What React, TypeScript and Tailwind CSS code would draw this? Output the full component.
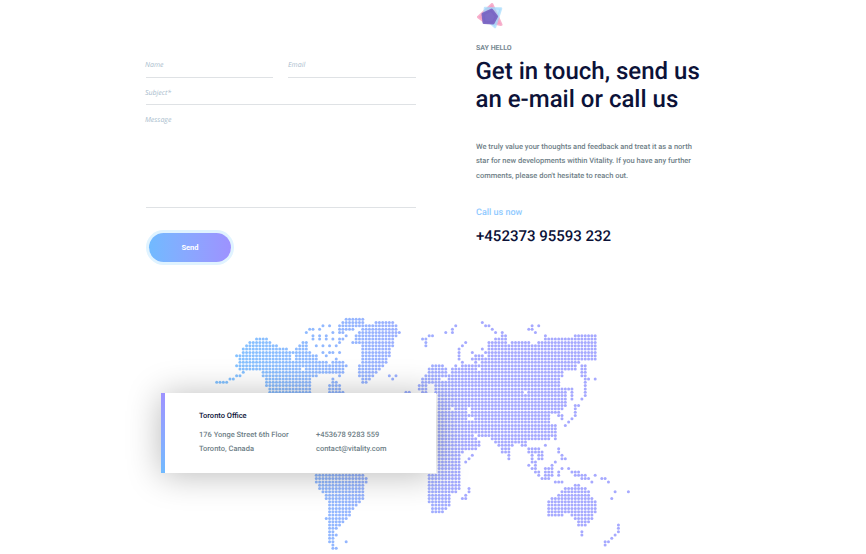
const P = 3.32;
const X0 = 216.7;
const Y0 = 319.2;
type Pt = [number, number];
type Z = [number, number];
const Z5: Z = [210, 310];
const Z6: Z = [410, 310];
const Z7: Z = [410, 430];
const Z8: Z = [300, 465];
const conv = (z: Z, pts: Pt[]): Pt[] => pts.map(([x, y]) => [z[0] + x / 3, z[1] + y / 3]);

const polys: Pt[][] = [
  conv(Z5, [[78,165],[98,112],[116,92],[160,80],[195,105],[225,112],[250,125],[265,100],[290,88],[300,125],[330,150],[360,160],[395,145],[412,165],[395,200],[370,195],[345,190],[300,205],[300,252],[175,252],[165,210],[150,180],[130,178],[100,190],[85,172]]),
  conv(Z5, [[352,252],[365,203],[382,215],[408,252]]),
  conv(Z5, [[423,97],[450,62],[455,48],[510,33],[552,38],[570,65],[550,100],[547,120],[532,162],[500,187],[470,218],[453,218],[443,182],[450,150],[455,100]]),
  conv(Z5, [[413,24],[460,24],[472,44],[385,72],[385,44]]),
  // Eurasia
  conv(Z6, [[18,240],[35,203],[60,172],[80,158],[105,168],[117,190],[130,172],[180,160],[210,158],[235,152],[236,92],[290,70],[296,100],[320,92],[380,100],[410,78],[490,78],[495,70],[562,70],[562,155],[520,152],[495,178],[460,182],[450,232],[470,232],[470,290],[450,312],[440,362],[420,362],[78,362],[78,250],[40,250]]),
  conv(Z6, [[513,160],[531,160],[531,262],[521,262],[521,205],[513,200]]),
  conv(Z6, [[472,230],[494,232],[494,268],[482,268]]),
  conv(Z7, [[78,-2],[438,-2],[438,20],[410,32],[358,32],[348,52],[310,38],[297,78],[280,72],[250,30],[220,20],[195,15],[218,40],[192,65],[165,65],[152,70],[148,122],[150,125],[147,182],[127,190],[125,215],[102,248],[70,252],[58,225],[48,190],[48,128],[78,128]]),
  conv(Z7, [[347,48],[382,48],[402,62],[402,86],[384,86],[384,72],[372,72],[372,97],[364,97]]),
  conv(Z7, [[404,114],[432,108],[432,136],[404,136]]),
  conv(Z7, [[414,208],[440,198],[465,173],[500,163],[527,168],[542,195],[562,225],[557,245],[537,282],[503,292],[493,266],[470,250],[440,264],[413,264]]),
  conv(Z8, [[43,22],[172,22],[195,28],[208,45],[195,58],[192,100],[162,127],[152,147],[132,167],[108,200],[108,218],[102,240],[122,252],[105,257],[83,232],[83,110],[73,90],[53,67],[43,47]]),
];

const holes: Pt[][] = [
  conv(Z5, [[240,135],[258,138],[258,148],[240,148]]),
  conv(Z5, [[304,205],[345,195],[345,235],[304,232]]),
  conv(Z5, [[268,172],[285,165],[290,180],[272,186]]),
  conv(Z6, [[337,236],[350,240],[345,258],[337,258]]),
  conv(Z6, [[170,294],[184,294],[186,308],[170,308]]),
  conv(Z6, [[172,320],[190,320],[190,330],[172,330]]),
  conv(Z6, [[127,292],[136,292],[136,302],[127,302]]),
  conv(Z6, [[416,315],[445,308],[448,340],[424,340]]),
  conv(Z6, [[96,202],[108,202],[108,214],[96,214]]),
  conv(Z6, [[57,218],[70,218],[70,248],[57,248]]),
  conv(Z6, [[205,168],[215,168],[215,178],[205,178]]),
  conv(Z7, [[128,12],[134,12],[134,34],[128,34]]),
];

const scatter: [Z, Pt[]][] = [
  [Z5, [[20,213],[30,213],[40,213],[50,213],[60,203],[70,203],[80,193],[90,193],[100,183],[80,135],[80,165],[100,115],[300,55],[310,55],[290,65],[335,45],[355,45],[325,55],[310,75],[325,75],[345,75],[365,65],[325,85],[345,85],[305,85],[385,45],[365,85],[385,85],[395,85],[405,75],[385,100],[320,105],[340,105],[360,105],[380,105],[360,125],[340,125],[320,135],[350,135],[370,125],[385,125],[380,145],[535,195],[545,205],[555,195],[585,243],[595,250]]],
  [Z6, [[35,85],[45,85],[55,75],[65,75],[45,95],[45,105],[112,65],[132,65],[132,55],[142,45],[212,35],[222,45],[232,45],[250,55],[260,65],[280,65],[360,55],[370,45],[370,55],[390,45],[380,65],[410,75],[162,105],[172,95],[152,115],[152,125],[152,135],[152,145],[162,155],[190,125],[190,145],[200,135],[200,145],[200,155],[210,135],[210,145],[220,115],[220,135],[220,145],[230,125],[230,145],[240,145],[142,165],[132,175],[537,203],[557,203],[527,253],[517,270],[505,285],[495,290],[495,300],[495,310],[495,320],[487,330],[477,340],[467,350],[458,320],[458,330]]],
  [Z7, [[405,50],[437,30],[300,90],[450,60],[450,70],[460,80],[460,90],[470,90],[440,100],[430,110],[360,110],[370,120],[380,100],[380,110],[380,120],[380,130],[390,130],[390,140],[400,150],[410,150],[420,150],[445,130],[445,140],[458,120],[440,160],[450,160],[460,160],[480,120],[490,130],[500,130],[500,140],[510,130],[510,140],[520,140],[520,150],[530,140],[530,150],[540,150],[550,160],[557,140],[575,150],[585,150],[595,160],[615,190],[605,210],[655,190],[160,208],[170,208],[170,198],[180,188],[180,178],[517,305],[517,318],[625,285],[625,295],[625,305],[615,318],[605,325],[595,337],[585,337],[585,347],[190,80],[180,90],[170,100]]],
  [Z8, [[77,162],[135,232],[107,212]]],
];

const inPoly = (x: number, y: number, poly: Pt[]) => {
  let inside = false;
  for (let i = 0, j = poly.length - 1; i < poly.length; j = i++) {
    const [xi, yi] = poly[i];
    const [xj, yj] = poly[j];
    if (yi > y !== yj > y && x < ((xj - xi) * (y - yi)) / (yj - yi) + xi) inside = !inside;
  }
  return inside;
};

const buildDots = () => {
  const cells = new Set<string>();
  for (let r = 0; r < 71; r++) {
    for (let c = 0; c < 125; c++) {
      const x = X0 + c * P;
      const y = Y0 + r * P;
      if (polys.some((p) => inPoly(x, y, p)) && !holes.some((p) => inPoly(x, y, p))) cells.add(`${c},${r}`);
    }
  }
  scatter.forEach(([z, pts]) => {
    conv(z, pts).forEach(([x, y]) => cells.add(`${Math.round((x - X0) / P)},${Math.round((y - Y0) / P)}`));
  });
  return [...cells].map((k) => k.split(",").map(Number));
};

const dots = buildDots();

function WorldMap() {
  return (
    <svg width="866" height="252" viewBox="0 302 866 252" className="block">
      <defs>
        <linearGradient id="mapGrad" gradientUnits="userSpaceOnUse" x1="230" y1="0" x2="470" y2="0">
          <stop offset="0" stopColor="#84c2ff" />
          <stop offset="1" stopColor="#a6a9ff" />
        </linearGradient>
      </defs>
      <g fill="url(#mapGrad)">
        {dots.map(([c, r]) => (
          <circle key={`${c}-${r}`} cx={X0 + c * P} cy={Y0 + r * P} r="1.5" />
        ))}
      </g>
    </svg>
  );
}

function Logo() {
  return (
    <svg width="28" height="28" viewBox="0 0 28 28" className="block blur-[0.5px]">
      <path d="M2.5 15 L16 2.5 L25 22.5 L8 19 Z" fill="#f59dc0" fillOpacity="0.8" stroke="#f59dc0" strokeOpacity="0.8" strokeWidth="3" strokeLinejoin="round" />
      <path d="M9 6 L25 6.5 L19 25 L8 15 Z" fill="#a0d8fc" fillOpacity="0.65" stroke="#a0d8fc" strokeOpacity="0.65" strokeWidth="2.5" strokeLinejoin="round" />
      <path d="M15.5 8 L20.5 14.5 L17 21 L8 20.5 L7 12 Z" fill="#7a66c4" fillOpacity="0.95" stroke="#7a66c4" strokeOpacity="0.95" strokeWidth="3" strokeLinejoin="round" />
    </svg>
  );
}

const labelCls = "font-['Open_Sans',sans-serif] italic text-[7px] leading-[10px] text-[#a9bccd]";
const bodyCls = "font-['Roboto',sans-serif] font-medium text-[7.5px] text-[#6f7f88]";

export default function App() {
  return (
    <div className="relative w-[866px] h-[554px] overflow-hidden bg-white font-['Roboto',sans-serif] [text-rendering:geometricPrecision]">
      <div className="flex h-[302px] pl-[146px] gap-[60px]">
        <form className="w-[270px] pt-[60px] flex flex-col">
          <div className="flex gap-[15px]">
            <div className="w-[127px] h-[18px] pt-[1px] border-b border-[#dfe2e5]">
              <div className={`${labelCls} -ml-[1px]`}>Name</div>
            </div>
            <div className="w-[128px] h-[18px] pt-[1px] border-b border-[#dfe2e5]">
              <div className={labelCls}>Email</div>
            </div>
          </div>
          <div className="mt-[10px] h-[17px] pt-[1px] border-b border-[#dfe2e5]">
            <div className={`${labelCls} -ml-[1px]`}>Subject*</div>
          </div>
          <div className="mt-[10px] h-[93px] pt-[1px] border-b border-[#dfe2e5]">
            <div className={`${labelCls} -ml-[1px]`}>Message</div>
          </div>
          <button
            type="button"
            className="mt-[25px] ml-[3px] w-[82px] h-[29px] rounded-full bg-gradient-to-r from-[#70baff] to-[#9d92ff] ring-[3px] ring-[#e0f3ff] text-white font-['Roboto',sans-serif] font-bold text-[7.5px]"
          >
            Send
          </button>
        </form>
        <div className="w-[240px] flex flex-col">
          <div className="mt-[2px]">
            <Logo />
          </div>
          <div className="mt-[14px] text-[7px] leading-[9px] font-bold text-[#7a8a94]">SAY HELLO</div>
          <h1 className="mt-[4px] -ml-[0.5px] text-[24px] leading-[28px] font-medium text-[#0c1238]">
            Get in touch, send us
            <br />
            an e-mail or call us
          </h1>
          <p className={`${bodyCls} mt-[27px] leading-[14.3px]`}>
            We truly value your thoughts and feedback and treat it as a north
            <br />
            star for new developments within Vitality. If you have any further
            <br />
            comments, please don't hesitate to reach out.
          </p>
          <div className="mt-[24px] text-[9px] leading-[12px] font-medium text-[#90caff]">Call us now</div>
          <div className="mt-[8px] text-[15px] leading-[18px] font-medium text-[#0c1238]">+452373 95593 232</div>
        </div>
      </div>
      <div className="relative">
        <WorldMap />
        <div className="absolute left-[161px] top-[91px] w-[275px] h-[80px] bg-white shadow-[0_2px_34px_rgba(0,0,0,0.28)] flex pl-[38px] pt-[18px]">
          <div className="absolute left-0 top-0 bottom-0 w-[4px] bg-gradient-to-b from-[#9d92ff] to-[#70baff]" />
          <div className="flex flex-col">
            <div className="text-[7.5px] leading-[10px] font-medium text-[#0c1238]">Toronto Office</div>
            <div className="flex mt-[7px]">
              <div className={`${bodyCls} w-[117px] leading-[14px]`}>
                176 Yonge Street 6th Floor
                <br />
                Toronto, Canada
              </div>
              <div className={`${bodyCls} leading-[14px]`}>
                +453678 9283 559
                <br />
                contact@vitality.com
              </div>
            </div>
          </div>
        </div>
      </div>
    </div>
  );
}
